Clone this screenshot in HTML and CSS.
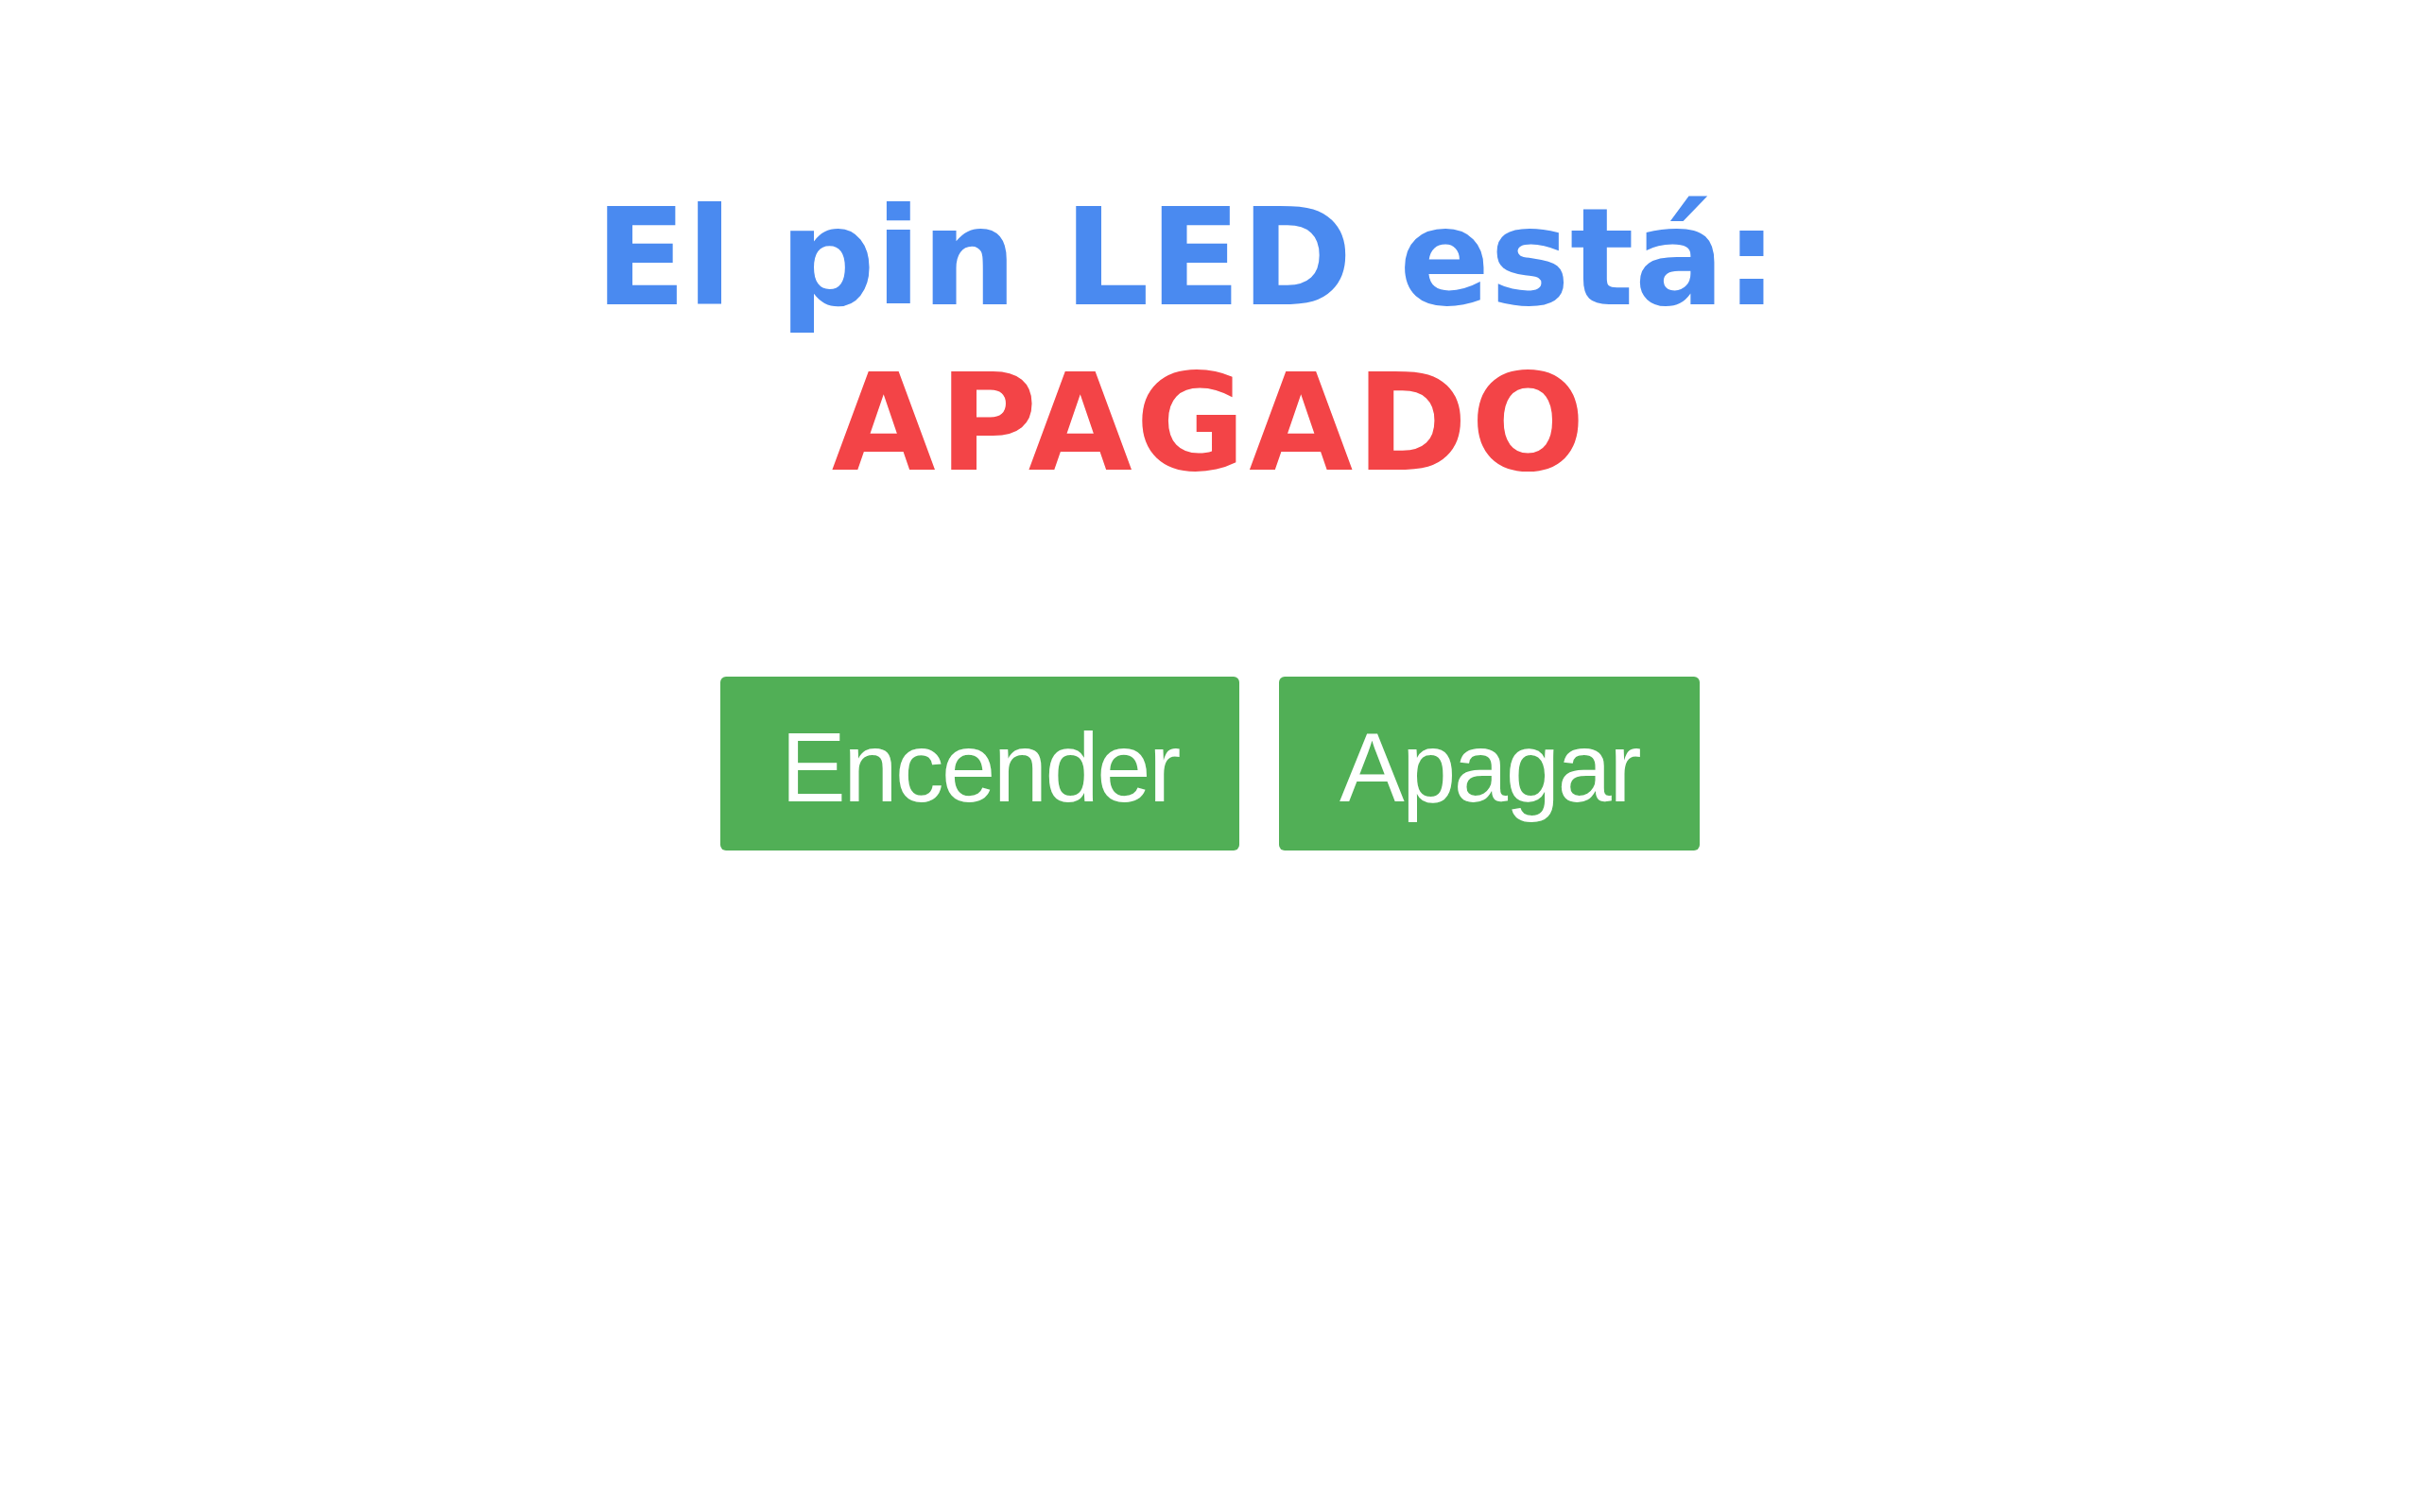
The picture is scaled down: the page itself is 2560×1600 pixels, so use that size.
FILE: index.html
```html
<!DOCTYPE html>
<html lang="es">
<head>
<meta charset="utf-8">
<title>LED</title>
<link rel="stylesheet" href="styles.css">
</head>
<body>
<main class="page">
  <h1 class="status">El pin LED está:&nbsp;<span class="state">APAGADO</span></h1>
  <div class="actions">
    <button class="btn">Encender</button>
    <button class="btn">Apagar</button>
  </div>
</main>
</body>
</html>
```
FILE: styles.css
```css
html, body {
  margin: 0;
  padding: 0;
  background: #ffffff;
}

.page {
  padding-top: 188px;
  text-align: center;
}

.status {
  margin: 0;
  font-family: "DejaVu Sans", Verdana, sans-serif;
  font-weight: bold;
  font-size: 142px;
  line-height: 170px;
  color: #4a8af0;
}

.state {
  display: block;
  padding-top: 5px;
  letter-spacing: 3.5px;
  color: #f34447;
}

.actions {
  margin-top: 183px;
  display: flex;
  justify-content: center;
  gap: 42px;
}

.btn {
  border: none;
  border-radius: 6px;
  background: #51af56;
  color: #ffffff;
  font-family: "Liberation Sans", Arial, sans-serif;
  font-size: 103px;
  letter-spacing: -2.5px;
  line-height: 118px;
  height: 184px;
  padding: 38px 64px 28px 64px;
  cursor: pointer;
}
```
